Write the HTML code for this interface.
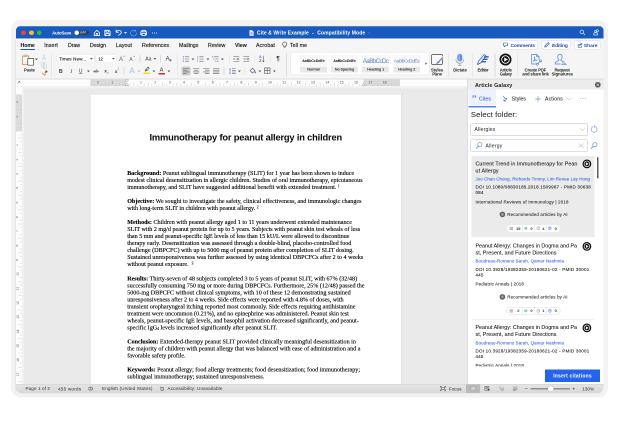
<!DOCTYPE html>
<html lang="en"><head><meta charset="utf-8"><title>Cite &amp; Write Example</title>
<style>
html,body{margin:0;padding:0;background:#fff}
#root{position:relative;width:620px;height:434px;overflow:hidden;background:#fff;font-family:"Liberation Sans",sans-serif;-webkit-font-smoothing:antialiased}
#root div,#root svg,#root span.t{position:absolute}
#root svg{overflow:visible}
#s{left:-41px;top:-35px;width:1340px;height:950px;transform:translate(-.5px,-.5px) scale(.5);transform-origin:0 0;will-change:transform}
#z{left:41.5px;top:35.5px;width:620px;height:434px;zoom:2}
.t{white-space:nowrap;display:block}
.t sup{font-size:.6em;vertical-align:baseline;position:relative;top:-.45em;line-height:0}
.t sub{font-size:.6em;vertical-align:baseline;position:relative;top:.2em;line-height:0}
</style></head>
<body><div id="root"><div id="s"><div id="z">
<div style="left:11px;top:20px;width:597px;height:377.5px;background:#f3f2f1;border-radius:10px"></div>
<div style="left:15.3px;top:39px;width:3px;height:352px;background:#d8d8d8"></div>
<div id="win" style="left:0;top:0;width:620px;height:434px;clip-path:inset(26.3px 16.5px 40.8px 16px round 4px 4px 6px 6px)">
<div style="left:16px;top:26px;width:588px;height:368px;background:#f5f5f5;"></div>
<div style="left:16px;top:26px;width:588px;height:12.7px;background:#185abd;"></div>
<div style="left:21px;top:30.4px;width:4.8px;height:4.8px;border-radius:50%;background:#e9453c"></div>
<div style="left:29px;top:30.4px;width:4.8px;height:4.8px;border-radius:50%;background:#f6b92e"></div>
<div style="left:36.8px;top:30.4px;width:4.8px;height:4.8px;border-radius:50%;background:#27c23a"></div>
<span id="t1" class="t" style="left:52.1px;top:30.27px;font-size:4.3px;line-height:5.16px;color:#fff;font-weight:700;letter-spacing:-0.090px;">AutoSave</span>
<div style="left:74.1px;top:30.4px;width:14.7px;height:4.7px;border-radius:2.4px;background:#33405a"></div>
<div style="left:74.3px;top:30.5px;width:4.5px;height:4.5px;border-radius:50%;background:#fff"></div>
<span id="t2" class="t" style="left:80.3px;top:31.21px;font-size:2.7px;line-height:3.24px;color:#e8e8e8;font-weight:700;letter-spacing:0.203px;">OFF</span>
<svg style="left:93.7px;top:29.3px;" width="6.8" height="6.8" viewBox="0 0 6 6"><path stroke="#fff" fill="none" stroke-width="0.7" stroke-linecap="round" stroke-linejoin="round" d="M0.6 3 L3 0.7 L5.4 3 V5.4 H0.6 Z M2.3 5.4 V3.6 H3.7 V5.4"/></svg>
<svg style="left:104px;top:29.3px;" width="6.9" height="6.9" viewBox="0 0 6 6"><path stroke="#fff" fill="none" stroke-width="0.7" stroke-linecap="round" stroke-linejoin="round" d="M0.7 0.7 H4.3 L5.3 1.7 V5.3 H0.7 Z M1.8 0.7 V2.3 H4 V0.7 M1.6 5.3 V3.5 H4.4 V5.3"/></svg>
<svg style="left:114.9px;top:29.2px;" width="7.6" height="7" viewBox="0 0 7 6.4"><path stroke="#fff" fill="none" stroke-width="0.7" stroke-linecap="round" stroke-linejoin="round" stroke-width="0.75" d="M1 0.8 V3 H3.2 M1.2 2.8 C2 1.2 4 0.7 5.2 1.8 C6.5 3 5.5 4.8 3.2 5.8"/></svg>
<svg style="left:123.9px;top:31.9px;" width="3" height="2" viewBox="0 0 3 2"><path fill="#fff" d="M0 0 H3 L1.5 1.8 Z"/></svg>
<svg style="left:129.9px;top:29.3px;" width="7" height="7" viewBox="0 0 6 6"><path stroke="#7d9fdc" fill="none" stroke-width="0.6" stroke-linecap="round" d="M4.6 1.2 A2.5 2.5 0 1 0 5.5 3 M4.7 0.3 V1.4 H3.6"/></svg>
<svg style="left:140.2px;top:29.3px;" width="7.4" height="6.9" viewBox="0 0 6.4 6"><path stroke="#fff" fill="none" stroke-width="0.7" stroke-linecap="round" stroke-linejoin="round" d="M1.7 2 V0.7 H4.7 V2 M1.7 4.4 H0.7 V2 H5.7 V4.4 H4.7 M1.7 3.4 H4.7 V5.3 H1.7 Z"/></svg>
<div style="left:152px;top:32.4px;width:0.9px;height:0.9px;border-radius:50%;background:#fff"></div>
<div style="left:154px;top:32.4px;width:0.9px;height:0.9px;border-radius:50%;background:#fff"></div>
<div style="left:156px;top:32.4px;width:0.9px;height:0.9px;border-radius:50%;background:#fff"></div>
<svg style="left:248.8px;top:29.9px;" width="5" height="6" viewBox="0 0 5 6"><path fill="#fff" d="M0.5 0.3 H3.2 L4.6 1.7 V5.7 H0.5 Z"/><path stroke="#185abd" stroke-width="0.4" d="M1.3 2.6 H3.8 M1.3 3.5 H3.8 M1.3 4.4 H3.8"/></svg>
<span id="t3" class="t" style="left:256.9px;top:30.06px;font-size:5px;line-height:6px;color:#fff;font-weight:700;letter-spacing:0.087px;">Cite &amp; Write Example</span>
<span id="t4" class="t" style="left:312px;top:30.06px;font-size:5px;line-height:6px;color:#fff;font-weight:700;">-</span>
<span id="t5" class="t" style="left:317.25px;top:30.06px;font-size:5px;line-height:6px;color:#fff;font-weight:700;letter-spacing:0.105px;">Compatibility Mode</span>
<svg style="left:367.3px;top:32.2px;" width="3" height="2" viewBox="0 0 3 2"><path stroke="#6f94d8" fill="none" stroke-width="0.5" d="M0.3 0.3 L1.5 1.5 L2.7 0.3"/></svg>
<svg style="left:579.5px;top:29.6px;opacity:.85;" width="6" height="6" viewBox="0 0 6 6"><circle stroke="#fff" fill="none" stroke-width="0.7" stroke-linecap="round" stroke-linejoin="round" stroke-width="0.55" cx="2.4" cy="2.4" r="1.8"/><path stroke="#fff" fill="none" stroke-width="0.7" stroke-linecap="round" stroke-linejoin="round" stroke-width="0.55" d="M3.8 3.8 L5.4 5.4"/></svg>
<svg style="left:592.8px;top:29.2px;opacity:.85;" width="6.4" height="7" viewBox="0 0 6.4 7"><circle stroke="#fff" fill="none" stroke-width="0.7" stroke-linecap="round" stroke-linejoin="round" stroke-width="0.6" cx="4.3" cy="1.8" r="1.1"/><path stroke="#fff" fill="none" stroke-width="0.7" stroke-linecap="round" stroke-linejoin="round" stroke-width="0.6" d="M0.7 6 V5 C0.7 4 1.8 3.6 2.6 3.6 C3.4 3.6 4.5 4 4.5 5 V6 Z"/><circle stroke="#fff" fill="none" stroke-width="0.7" stroke-linecap="round" stroke-linejoin="round" stroke-width="0.6" cx="2.6" cy="2.4" r="0.9"/></svg>
<div style="left:16px;top:38.7px;width:588px;height:12.5px;background:#f6f6f6;"></div>
<div style="left:16px;top:38.7px;width:588px;height:0.6px;background:#fff;"></div>
<span id="t6" class="t" style="left:20.5px;top:41.88px;font-size:5.3px;line-height:6.36px;color:#1a1a1a;font-weight:700;letter-spacing:-0.117px;-webkit-text-stroke:0.05px;">Home</span>
<span id="t7" class="t" style="left:44.2px;top:41.88px;font-size:5.3px;line-height:6.36px;color:#1a1a1a;letter-spacing:0.092px;-webkit-text-stroke:0.14px;">Insert</span>
<span id="t8" class="t" style="left:68px;top:41.88px;font-size:5.3px;line-height:6.36px;color:#1a1a1a;letter-spacing:-0.092px;-webkit-text-stroke:0.14px;">Draw</span>
<span id="t9" class="t" style="left:89.9px;top:41.88px;font-size:5.3px;line-height:6.36px;color:#1a1a1a;letter-spacing:-0.065px;-webkit-text-stroke:0.14px;">Design</span>
<span id="t10" class="t" style="left:115.9px;top:41.88px;font-size:5.3px;line-height:6.36px;color:#1a1a1a;letter-spacing:0.032px;-webkit-text-stroke:0.14px;">Layout</span>
<span id="t11" class="t" style="left:142px;top:41.88px;font-size:5.3px;line-height:6.36px;color:#1a1a1a;letter-spacing:-0.009px;-webkit-text-stroke:0.14px;">References</span>
<span id="t12" class="t" style="left:179px;top:41.88px;font-size:5.3px;line-height:6.36px;color:#1a1a1a;letter-spacing:-0.004px;-webkit-text-stroke:0.14px;">Mailings</span>
<span id="t13" class="t" style="left:208px;top:41.88px;font-size:5.3px;line-height:6.36px;color:#1a1a1a;letter-spacing:0.004px;-webkit-text-stroke:0.14px;">Review</span>
<span id="t14" class="t" style="left:235px;top:41.88px;font-size:5.3px;line-height:6.36px;color:#1a1a1a;font-weight:700;letter-spacing:-0.094px;-webkit-text-stroke:0.05px;">View</span>
<span id="t15" class="t" style="left:256px;top:41.88px;font-size:5.3px;line-height:6.36px;color:#1a1a1a;letter-spacing:0.106px;-webkit-text-stroke:0.14px;">Acrobat</span>
<span id="t16" class="t" style="left:290px;top:41.88px;font-size:5.3px;line-height:6.36px;color:#1a1a1a;letter-spacing:0.031px;-webkit-text-stroke:0.14px;">Tell me</span>
<div style="left:20.5px;top:49px;width:14.25px;height:1px;background:#185abd;"></div>
<svg style="left:281.8px;top:41.3px;" width="5.4" height="6.6" viewBox="0 0 5.4 6.6"><path stroke="#444" fill="none" stroke-width="0.55" d="M2.7 0.5 A2 2 0 0 1 3.8 4.2 V5 H1.6 V4.2 A2 2 0 0 1 2.7 0.5 Z M1.9 5.9 H3.5"/></svg>
<div style="left:500.4px;top:41px;width:37px;height:8px;background:#fff;border-radius:1.5px;box-shadow:0 0 0 0.5px #dcdcdc"></div>
<div style="left:542px;top:41px;width:28px;height:8px;background:#fff;border-radius:1.5px;box-shadow:0 0 0 0.5px #dcdcdc"></div>
<div style="left:574.6px;top:41px;width:25.4px;height:8px;background:#fff;border-radius:1.5px;box-shadow:0 0 0 0.5px #dcdcdc"></div>
<svg style="left:503.2px;top:42.7px;" width="5" height="4.8" viewBox="0 0 5 4.8"><path stroke="#1b4fae" fill="none" stroke-width="0.6" stroke-linejoin="round" d="M0.5 0.5 H4.5 V3.3 H2.3 L1.3 4.3 V3.3 H0.5 Z"/></svg>
<span id="t17" class="t" style="left:510.5px;top:42.32px;font-size:4.9px;line-height:5.88px;color:#1b4fae;font-weight:700;letter-spacing:-0.115px;">Comments</span>
<svg style="left:544.2px;top:42.2px;" width="5.8" height="5.8" viewBox="0 0 5 5"><path stroke="#1b4fae" fill="none" stroke-width="0.55" stroke-linejoin="round" d="M0.6 4.4 L1 3 L3.6 0.5 L4.5 1.4 L2 4 Z"/></svg>
<span id="t18" class="t" style="left:552px;top:42.32px;font-size:4.9px;line-height:5.88px;color:#1b4fae;font-weight:700;letter-spacing:-0.129px;">Editing</span>
<svg style="left:577.3px;top:42.4px;" width="5.4" height="5.2" viewBox="0 0 5.4 5.2"><path stroke="#1b4fae" fill="none" stroke-width="0.6" stroke-linejoin="round" stroke-linecap="round" d="M2 2.2 H0.6 V4.7 H4 V3.6 M2.2 3.3 C2.2 2 3 1.5 4 1.5 M3.2 0.5 L4.4 1.5 L3.2 2.5"/></svg>
<span id="t19" class="t" style="left:583.9px;top:42.32px;font-size:4.9px;line-height:5.88px;color:#1b4fae;font-weight:700;letter-spacing:-0.023px;">Share</span>
<div style="left:16px;top:51px;width:588px;height:27.6px;background:#f5f5f5;"></div>
<div style="left:16px;top:78.6px;width:588px;height:0.9px;background:#dddddd;"></div>
<svg style="left:21.5px;top:54px;" width="13.5" height="12" viewBox="0 0 13.5 12"><path fill="none" stroke="#e8963a" stroke-width="0.9" stroke-linejoin="round" d="M2.6 2 H1 V10.6 H6"/><path fill="none" stroke="#e8963a" stroke-width="0.9" d="M5.4 2 H7.2 V4"/>
<path fill="#f5f5f5" stroke="#9a9a9a" stroke-width="0.6" stroke-linejoin="round" d="M2.7 2.6 V1.3 H3.4 C3.4 0.5 4.7 0.5 4.7 1.3 H5.4 V2.6 Z"/>
<rect x="6.3" y="4.4" width="5.9" height="6.8" rx="0.5" fill="#fff" stroke="#444" stroke-width="0.7"/></svg>
<svg style="left:35px;top:58.7px;" width="2.8" height="1.8" viewBox="0 0 2.8 1.8"><path fill="#555" d="M0 0 H2.8 L1.4 1.7 Z"/></svg>
<span id="t20" class="t" style="left:24px;top:67.37px;font-size:4.3px;line-height:5.16px;color:#2a2a2a;font-weight:700;letter-spacing:-0.144px;">Paste</span>
<svg style="left:41.3px;top:54.2px;" width="5" height="6" viewBox="0 0 5 6"><path stroke="#c4cfe2" fill="none" stroke-width="0.45" d="M1.5 0.4 L3.3 4 M3.5 0.4 L1.7 4"/><circle cx="1.4" cy="4.7" r="0.8" fill="none" stroke="#b4c8ec" stroke-width="0.45"/><circle cx="3.6" cy="4.7" r="0.8" fill="none" stroke="#b4c8ec" stroke-width="0.45"/></svg>
<svg style="left:41px;top:61.8px;" width="6.4" height="6.6" viewBox="0 0 6.4 6.6"><path stroke="#c4c4c4" fill="none" stroke-width="0.5" d="M0.6 0.6 H3.6 V5 H0.6 Z M2.4 1.8 H4.6 L5.6 2.8 V6.2 H2.4 Z"/></svg>
<svg style="left:41.3px;top:70.2px;" width="6.4" height="6" viewBox="0 0 6.4 6"><path stroke="#444" fill="none" stroke-width="0.6" d="M3.2 2.6 L5 0.8 L5.6 1.4 L3.8 3.2 M4.2 0.6 L5.8 2.2"/><path stroke="#e8873a" fill="none" stroke-width="0.9" stroke-linejoin="round" d="M0.8 3 L3 5.2 L4.6 3.8"/></svg>
<div style="left:51.4px;top:53.5px;width:0.6px;height:23.5px;background:#dcdcdc;"></div>
<div style="left:56.8px;top:54.8px;width:37.2px;height:7.8px;background:#fff;border-radius:1.5px;box-shadow:0 0 0 0.4px #e2e2e2"></div>
<span id="t21" class="t" style="left:58.9px;top:56.13px;font-size:4.7px;line-height:5.64px;color:#111;letter-spacing:0.040px;-webkit-text-stroke:0.09px;">Times New...</span>
<svg style="left:90.1px;top:58.2px;" width="2.8" height="1.8" viewBox="0 0 2.8 1.8"><path fill="#555" d="M0 0 H2.8 L1.4 1.7 Z"/></svg>
<div style="left:96px;top:54.8px;width:19.8px;height:7.8px;background:#fff;border-radius:1.5px;box-shadow:0 0 0 0.4px #e2e2e2"></div>
<span id="t22" class="t" style="left:98.2px;top:56.31px;font-size:4.4px;line-height:5.28px;color:#111;letter-spacing:-0.099px;-webkit-text-stroke:0.09px;">12</span>
<svg style="left:111.9px;top:58.2px;" width="2.8" height="1.8" viewBox="0 0 2.8 1.8"><path fill="#555" d="M0 0 H2.8 L1.4 1.7 Z"/></svg>
<span id="t23" class="t" style="left:119px;top:55.37px;font-size:6px;line-height:7.2px;color:#666;">A</span>
<svg style="left:123px;top:55.4px;" width="2.4" height="1.6" viewBox="0 0 2.4 1.6"><path stroke="#4a80d8" fill="none" stroke-width="0.5" d="M0.3 1.3 L1.2 0.4 L2.1 1.3"/></svg>
<span id="t24" class="t" style="left:129.33px;top:56.36px;font-size:5px;line-height:6px;color:#666;">A</span>
<svg style="left:132.8px;top:55.6px;" width="2.4" height="1.6" viewBox="0 0 2.4 1.6"><path stroke="#4a80d8" fill="none" stroke-width="0.5" d="M0.3 0.4 L1.2 1.3 L2.1 0.4"/></svg>
<div style="left:139.7px;top:55.2px;width:0.6px;height:7.2px;background:#dcdcdc;"></div>
<span id="t25" class="t" style="left:145.25px;top:55.84px;font-size:5.2px;line-height:6.24px;color:#444;letter-spacing:-0.080px;">Aa</span>
<svg style="left:153.6px;top:58.2px;" width="2.8" height="1.8" viewBox="0 0 2.8 1.8"><path fill="#555" d="M0 0 H2.8 L1.4 1.7 Z"/></svg>
<div style="left:160.2px;top:55.2px;width:0.6px;height:7.2px;background:#dcdcdc;"></div>
<span id="t26" class="t" style="left:165.53px;top:55.15px;font-size:6.2px;line-height:7.44px;color:#444;">A</span>
<svg style="left:168.6px;top:58.6px;" width="3.6" height="3.4" viewBox="0 0 3.6 3.4"><path fill="#d9589a" d="M0.3 1.8 L1.8 0.3 L3.3 1.8 L1.8 3.2 Z"/><path fill="#7a8fe0" d="M1.8 0.3 L3.3 1.8 L2.6 2.5 L1.1 1 Z"/></svg>
<span id="t27" class="t" style="left:58.85px;top:68.12px;font-size:5.4px;line-height:6.48px;color:#444;font-weight:700;">B</span>
<span id="t28" class="t" style="left:70.27px;top:67.9px;font-size:5.6px;line-height:6.72px;color:#444;font-family:'Liberation Serif',serif;font-style:italic;">I</span>
<span id="t29" class="t" style="left:78.89px;top:68.16px;font-size:5px;line-height:6px;color:#444;text-decoration:underline;text-decoration-thickness:0.4px;text-underline-offset:0.6px;">U</span>
<svg style="left:86.8px;top:70.4px;" width="2.8" height="1.8" viewBox="0 0 2.8 1.8"><path fill="#555" d="M0 0 H2.8 L1.4 1.7 Z"/></svg>
<span id="t30" class="t" style="left:93.67px;top:68.73px;font-size:4.2px;line-height:5.04px;color:#555;">ab</span>
<div style="left:93.2px;top:71.3px;width:5.6px;height:0.4px;background:#555;"></div>
<span id="t31" class="t" style="left:104.26px;top:68.18px;font-size:4.8px;line-height:5.76px;color:#444;font-weight:700;">x</span>
<span id="t32" class="t" style="left:107.08px;top:71.47px;font-size:2.6px;line-height:3.12px;color:#3a78d8;">2</span>
<span id="t33" class="t" style="left:114.86px;top:68.38px;font-size:4.8px;line-height:5.76px;color:#444;font-weight:700;">x</span>
<span id="t34" class="t" style="left:117.78px;top:67.07px;font-size:2.6px;line-height:3.12px;color:#3a78d8;">2</span>
<div style="left:123.7px;top:67px;width:0.6px;height:8px;background:#dcdcdc;"></div>
<span id="t35" class="t" style="left:128.89px;top:65.54px;font-size:8.6px;line-height:10.32px;color:#bcd0f0;font-weight:700;">A</span>
<svg style="left:137.6px;top:70.4px;" width="2.8" height="1.8" viewBox="0 0 2.8 1.8"><path fill="#bbb" d="M0 0 H2.8 L1.4 1.7 Z"/></svg>
<svg style="left:143.3px;top:66.6px;" width="6.6" height="5.4" viewBox="0 0 6.6 5.4"><path stroke="#444" fill="none" stroke-width="0.6" stroke-linejoin="round" d="M1.6 4.4 L2.3 2.8 L4.6 0.6 L5.8 1.8 L3.5 4 L2 4.7 Z M2.3 2.8 L3.5 4"/></svg>
<div style="left:143.6px;top:72.6px;width:6.2px;height:1.5px;background:#f4dc1c;"></div>
<svg style="left:152.4px;top:70.4px;" width="2.8" height="1.8" viewBox="0 0 2.8 1.8"><path fill="#555" d="M0 0 H2.8 L1.4 1.7 Z"/></svg>
<span id="t36" class="t" style="left:159.63px;top:66.5px;font-size:5.6px;line-height:6.72px;color:#444;">A</span>
<div style="left:158.3px;top:72.8px;width:6.7px;height:1.5px;background:#e0261c;"></div>
<svg style="left:167.3px;top:70.4px;" width="2.8" height="1.8" viewBox="0 0 2.8 1.8"><path fill="#555" d="M0 0 H2.8 L1.4 1.7 Z"/></svg>
<div style="left:177.3px;top:52.8px;width:0.6px;height:23.7px;background:#dcdcdc;"></div>
<svg style="left:182.6px;top:55.8px;" width="7" height="6" viewBox="0 0 7 6"><path stroke="#666" stroke-width="0.55" d="M2.4 0.8 H6.6"/><circle cx="0.8" cy="0.8" r="0.55" fill="#2f6fd6"/><path stroke="#666" stroke-width="0.55" d="M2.4 3 H6.6"/><circle cx="0.8" cy="3" r="0.55" fill="#2f6fd6"/><path stroke="#666" stroke-width="0.55" d="M2.4 5.2 H6.6"/><circle cx="0.8" cy="5.2" r="0.55" fill="#2f6fd6"/></svg>
<svg style="left:191.6px;top:58.4px;" width="2.8" height="1.8" viewBox="0 0 2.8 1.8"><path fill="#555" d="M0 0 H2.8 L1.4 1.7 Z"/></svg>
<svg style="left:197.1px;top:55.8px;" width="7" height="6" viewBox="0 0 7 6"><path stroke="#666" stroke-width="0.55" d="M2.4 0.8 H6.6"/><path stroke="#2f6fd6" stroke-width="0.5" d="M0.8 0.10000000000000009 V1.5"/><path stroke="#666" stroke-width="0.55" d="M2.4 3 H6.6"/><path stroke="#2f6fd6" stroke-width="0.5" d="M0.8 2.3 V3.7"/><path stroke="#666" stroke-width="0.55" d="M2.4 5.2 H6.6"/><path stroke="#2f6fd6" stroke-width="0.5" d="M0.8 4.5 V5.9"/></svg>
<svg style="left:206.3px;top:58.4px;" width="2.8" height="1.8" viewBox="0 0 2.8 1.8"><path fill="#555" d="M0 0 H2.8 L1.4 1.7 Z"/></svg>
<svg style="left:212.2px;top:55.8px;" width="7" height="6" viewBox="0 0 7 6"><path stroke="#666" stroke-width="0.55" d="M1.8 0.8 H6.6 M3.4 3 H6.6 M4.6 5.2 H6.6"/><path stroke="#2f6fd6" stroke-width="0.5" d="M0.5 0.1 V1.5 M1.9 2.3 V3.7 M3.2 4.5 V5.9"/></svg>
<svg style="left:221.1px;top:58.4px;" width="2.8" height="1.8" viewBox="0 0 2.8 1.8"><path fill="#555" d="M0 0 H2.8 L1.4 1.7 Z"/></svg>
<div style="left:229px;top:55.2px;width:0.6px;height:7.2px;background:#dcdcdc;"></div>
<svg style="left:233px;top:55.8px;" width="6.6" height="6" viewBox="0 0 6.6 6"><path stroke="#666" stroke-width="0.55" d="M0.3 0.6 H6.3 M3.6 2.2 H6.3 M3.6 3.8 H6.3 M0.3 5.4 H6.3"/><path stroke="#2f6fd6" fill="none" stroke-width="0.5" d="M2.6 3 H0.4 M1.2 2.2 L0.4 3 L1.2 3.8"/></svg>
<svg style="left:242.8px;top:55.8px;" width="6.6" height="6" viewBox="0 0 6.6 6"><path stroke="#666" stroke-width="0.55" d="M0.3 0.6 H6.3 M3.6 2.2 H6.3 M3.6 3.8 H6.3 M0.3 5.4 H6.3"/><path stroke="#2f6fd6" fill="none" stroke-width="0.5" d="M0.4 3 H2.6 M1.8 2.2 L2.6 3 L1.8 3.8"/></svg>
<div style="left:254.3px;top:55.2px;width:0.6px;height:7.2px;background:#dcdcdc;"></div>
<span id="t37" class="t" style="left:259.07px;top:55px;font-size:3.4px;line-height:4.08px;color:#2f6fd6;font-weight:700;">A</span>
<span id="t38" class="t" style="left:259.26px;top:59.2px;font-size:3.4px;line-height:4.08px;color:#444;font-weight:700;">Z</span>
<svg style="left:262.2px;top:55.4px;" width="2.6" height="7" viewBox="0 0 2.6 7"><path stroke="#555" fill="none" stroke-width="0.55" d="M1.3 0.3 V6.2 M0.3 5.2 L1.3 6.3 L2.3 5.2"/></svg>
<div style="left:270px;top:55.2px;width:0.6px;height:7.2px;background:#dcdcdc;"></div>
<span id="t39" class="t" style="left:276.33px;top:55.07px;font-size:6px;line-height:7.2px;color:#333;font-weight:700;">¶</span>
<div style="left:181.4px;top:66.4px;width:9.3px;height:9.1px;background:#cdcdcd;border-radius:1.6px"></div>
<svg style="left:182.8px;top:67.85px;" width="6.4" height="6.2" viewBox="0 0 6.4 6.2"><path stroke="#666" stroke-width="0.6" d="M0.00 0.5 H6.40"/><path stroke="#666" stroke-width="0.6" d="M0.00 2.2 H4.40"/><path stroke="#666" stroke-width="0.6" d="M0.00 3.9 H6.40"/><path stroke="#666" stroke-width="0.6" d="M0.00 5.6 H3.40"/></svg>
<svg style="left:192.8px;top:67.85px;" width="6.4" height="6.2" viewBox="0 0 6.4 6.2"><path stroke="#666" stroke-width="0.6" d="M0.00 0.5 H6.40"/><path stroke="#666" stroke-width="0.6" d="M1.00 2.2 H5.40"/><path stroke="#666" stroke-width="0.6" d="M0.00 3.9 H6.40"/><path stroke="#666" stroke-width="0.6" d="M1.00 5.6 H5.40"/></svg>
<svg style="left:203px;top:67.85px;" width="6.4" height="6.2" viewBox="0 0 6.4 6.2"><path stroke="#666" stroke-width="0.6" d="M0.00 0.5 H6.40"/><path stroke="#666" stroke-width="0.6" d="M2.00 2.2 H6.40"/><path stroke="#666" stroke-width="0.6" d="M0.00 3.9 H6.40"/><path stroke="#666" stroke-width="0.6" d="M2.00 5.6 H6.40"/></svg>
<svg style="left:213.1px;top:67.85px;" width="6.4" height="6.2" viewBox="0 0 6.4 6.2"><path stroke="#666" stroke-width="0.6" d="M0.00 0.5 H6.40"/><path stroke="#666" stroke-width="0.6" d="M0.00 2.2 H6.40"/><path stroke="#666" stroke-width="0.6" d="M0.00 3.9 H6.40"/><path stroke="#666" stroke-width="0.6" d="M0.00 5.6 H6.40"/></svg>
<div style="left:223.7px;top:67px;width:0.6px;height:8px;background:#dcdcdc;"></div>
<svg style="left:229.2px;top:67.8px;" width="7" height="6.4" viewBox="0 0 7 6.4"><path stroke="#666" stroke-width="0.55" d="M3 0.6 H6.8 M3 2.3 H6.8 M3 4 H6.8 M3 5.7 H6.8"/><path stroke="#2f6fd6" fill="none" stroke-width="0.5" d="M1 0.5 V5.8 M0.2 1.4 L1 0.5 L1.8 1.4 M0.2 4.9 L1 5.8 L1.8 4.9"/></svg>
<svg style="left:237.9px;top:70.4px;" width="2.8" height="1.8" viewBox="0 0 2.8 1.8"><path fill="#555" d="M0 0 H2.8 L1.4 1.7 Z"/></svg>
<div style="left:244.45px;top:67px;width:0.6px;height:8px;background:#dcdcdc;"></div>
<svg style="left:249.6px;top:67.6px;" width="6.8" height="6.6" viewBox="0 0 6.8 6.6"><path stroke="#444" fill="none" stroke-width="0.55" stroke-linejoin="round" d="M3 0.8 L5.4 3.2 L3 5.6 L0.6 3.2 Z M3 0.8 V0.2"/><path fill="#2f6fd6" d="M5.6 3.6 C6.2 4.4 6.4 4.8 6.4 5.1 A0.7 0.7 0 0 1 5 5.1 C5 4.8 5.2 4.4 5.6 3.6 Z"/></svg>
<svg style="left:258.4px;top:70.4px;" width="2.8" height="1.8" viewBox="0 0 2.8 1.8"><path fill="#555" d="M0 0 H2.8 L1.4 1.7 Z"/></svg>
<svg style="left:264.2px;top:67.7px;" width="6.4" height="6.4" viewBox="0 0 6.4 6.4"><path stroke="#555" fill="none" stroke-width="0.6" d="M0.4 0.4 H6 V6 H0.4 Z M3.2 0.4 V6 M0.4 3.2 H6"/></svg>
<svg style="left:273.1px;top:70.4px;" width="2.8" height="1.8" viewBox="0 0 2.8 1.8"><path fill="#555" d="M0 0 H2.8 L1.4 1.7 Z"/></svg>
<div style="left:286.2px;top:52.8px;width:0.6px;height:23.7px;background:#dedede;"></div>
<div style="left:290.8px;top:52.4px;width:138.4px;height:21.9px;background:#fff;border-radius:2px;box-shadow:0 0 0 0.4px #e4e4e4"></div>
<div style="left:300px;top:55px;width:26.8px;height:12px;background:#f8f8f8;"></div>
<div style="left:300px;top:67px;width:26.8px;height:5.7px;background:#e8e8e8;"></div>
<span id="t40" class="t" style="left:302.15px;top:58.82px;font-size:3.7px;line-height:4.44px;color:#222;font-weight:700;letter-spacing:-0.132px;">AaBbCcDdEe</span>
<span id="t41" class="t" style="left:307.25px;top:67.52px;font-size:3.7px;line-height:4.44px;color:#333;font-weight:700;letter-spacing:-0.072px;">Normal</span>
<div style="left:331.1px;top:55px;width:26.8px;height:12px;background:#f8f8f8;"></div>
<div style="left:331.1px;top:67px;width:26.8px;height:5.7px;background:#e8e8e8;"></div>
<span id="t42" class="t" style="left:333.25px;top:58.82px;font-size:3.7px;line-height:4.44px;color:#222;font-weight:700;letter-spacing:-0.132px;">AaBbCcDdEe</span>
<span id="t43" class="t" style="left:334.9px;top:67.52px;font-size:3.7px;line-height:4.44px;color:#333;font-weight:700;letter-spacing:-0.113px;">No Spacing</span>
<div style="left:362.2px;top:55px;width:26.8px;height:12px;background:#f8f8f8;"></div>
<div style="left:362.2px;top:67px;width:26.8px;height:5.7px;background:#e8e8e8;"></div>
<span id="t44" class="t" style="left:362.8px;top:57.35px;font-size:6.2px;line-height:7.44px;color:#5c86cc;letter-spacing:-0.588px;">AaBbCcDc</span>
<span id="t45" class="t" style="left:367.1px;top:67.52px;font-size:3.7px;line-height:4.44px;color:#333;font-weight:700;letter-spacing:-0.074px;">Heading 1</span>
<div style="left:393.3px;top:55px;width:26.8px;height:12px;background:#f8f8f8;"></div>
<div style="left:393.3px;top:67px;width:26.8px;height:5.7px;background:#e8e8e8;"></div>
<span id="t46" class="t" style="left:393.9px;top:58.18px;font-size:4.8px;line-height:5.76px;color:#5c86cc;letter-spacing:-0.400px;">AaBbCcDdEe</span>
<span id="t47" class="t" style="left:398.2px;top:67.52px;font-size:3.7px;line-height:4.44px;color:#333;font-weight:700;letter-spacing:-0.074px;">Heading 2</span>
<svg style="left:424.8px;top:61.8px;" width="2.4" height="3" viewBox="0 0 2.4 3"><path fill="#555" d="M0.3 0.2 L2.1 1.5 L0.3 2.8 Z"/></svg>
<svg style="left:431px;top:54px;" width="12.6" height="11.4" viewBox="0 0 12.6 11.4"><rect x="0.6" y="0.6" width="10.8" height="9.8" rx="0.8" fill="#fbfbfb" stroke="#444" stroke-width="0.7"/><path stroke="#666" stroke-width="0.8" d="M11.6 4 L7.2 8.2"/><path stroke="#f5f5f5" stroke-width="1.8" d="M12.4 2.6 L10.2 4.8"/><path stroke="#666" stroke-width="0.8" d="M11.9 3.4 L7.4 7.9"/><path fill="#4a86dc" d="M7.6 7.2 L8.6 8.2 C7.6 9.6 6 9.8 4.4 9.6 C5.8 9 6 7.6 7.6 7.2 Z"/></svg>
<span id="t48" class="t" style="left:430.9px;top:67.27px;font-size:4.3px;line-height:5.16px;color:#2a2a2a;font-weight:700;letter-spacing:-0.077px;">Styles</span>
<span id="t49" class="t" style="left:432.2px;top:71.47px;font-size:4.3px;line-height:5.16px;color:#2a2a2a;font-weight:700;letter-spacing:-0.168px;">Pane</span>
<div style="left:448.5px;top:53.5px;width:0.6px;height:23.5px;background:#dcdcdc;"></div>
<svg style="left:454.6px;top:53.4px;" width="10.4" height="13" viewBox="0 0 10.4 13"><rect x="2.8" y="0.4" width="5" height="7.6" rx="2.5" fill="#5b93e0"/><rect x="3.9" y="1" width="1.6" height="6.4" rx="0.8" fill="#8ab4ec"/><path stroke="#9a9a9a" fill="none" stroke-width="0.7" d="M1.4 6 C1.4 11 9.2 11 9.2 6 M5.3 9.9 V12 M3.6 12.2 H7"/></svg>
<span id="t50" class="t" style="left:453.2px;top:67.27px;font-size:4.3px;line-height:5.16px;color:#2a2a2a;font-weight:700;letter-spacing:-0.104px;">Dictate</span>
<div style="left:472.1px;top:53.5px;width:0.6px;height:23.5px;background:#dcdcdc;"></div>
<svg style="left:476.6px;top:53.4px;" width="12.4" height="12.4" viewBox="0 0 12.4 12.4"><path stroke="#2f6cd0" fill="none" stroke-width="0.8" stroke-linejoin="round" d="M1 11 L2 7.6 L7.8 1 L9.6 2.6 L4.2 9.4 Z"/><path stroke="#1c51b3" stroke-width="1.25" d="M7.6 3.4 H12.2 M6.2 5.8 H11 M4.8 8.2 H9.6"/><path stroke="#2f6cd0" stroke-width="0.7" d="M1 11 L4.2 9.4"/></svg>
<span id="t51" class="t" style="left:477.55px;top:67.27px;font-size:4.3px;line-height:5.16px;color:#2a2a2a;font-weight:700;letter-spacing:-0.252px;">Editor</span>
<div style="left:494.7px;top:53.5px;width:0.6px;height:23.5px;background:#dcdcdc;"></div>
<svg style="left:499.7px;top:53.3px" width="12" height="12" viewBox="-10 -10 20 20"><circle r="10" fill="#111"/><circle r="6.4" fill="none" stroke="#fff" stroke-width="1.5"/><path fill="#fff" d="M-2.2 -3.6 L4 0 L-2.2 3.6 Z"/></svg>
<span id="t52" class="t" style="left:499.75px;top:67.27px;font-size:4.3px;line-height:5.16px;color:#2a2a2a;font-weight:700;letter-spacing:-0.211px;">Article</span>
<span id="t53" class="t" style="left:499.7px;top:71.47px;font-size:4.3px;line-height:5.16px;color:#2a2a2a;font-weight:700;letter-spacing:-0.350px;">Galaxy</span>
<div style="left:517.4px;top:53.5px;width:0.6px;height:23.5px;background:#dcdcdc;"></div>
<svg style="left:530.6px;top:54px;" width="11.6" height="11.6" viewBox="0 0 11.6 11.6"><path stroke="#4a80dc" fill="none" stroke-width="0.7" stroke-linejoin="round" d="M8.6 5.6 V2.6 L6.4 0.5 H1.2 V10 H5.4 M6.2 0.6 V2.8 H8.5"/><path stroke="#4a80dc" fill="none" stroke-width="0.55" d="M2.6 7.4 C4 6 4.6 4 4.2 3 C3.6 2.6 3.6 4 4.6 5.4 C5.4 6.4 6.6 6.6 7 6.2 C6.6 5.6 4 6.4 2.6 7.4 Z"/><path stroke="#4a80dc" fill="none" stroke-width="0.7" stroke-linecap="round" d="M7.2 9.8 L9.8 7.2"/><circle cx="6.8" cy="10.2" r="1" fill="none" stroke="#4a80dc" stroke-width="0.6"/><circle cx="10.2" cy="6.8" r="1" fill="none" stroke="#4a80dc" stroke-width="0.6"/></svg>
<span id="t54" class="t" style="left:524.55px;top:67.27px;font-size:4.3px;line-height:5.16px;color:#2a2a2a;font-weight:700;letter-spacing:-0.146px;">Create PDF</span>
<span id="t55" class="t" style="left:522.3px;top:71.47px;font-size:4.3px;line-height:5.16px;color:#2a2a2a;font-weight:700;letter-spacing:-0.178px;">and share link</span>
<svg style="left:554.6px;top:54px;" width="13" height="11.6" viewBox="0 0 13 11.6"><path stroke="#4a80dc" fill="none" stroke-width="0.7" stroke-linejoin="round" d="M5.4 0.5 C7 0.5 7.6 1.8 7.6 3 C7.6 4.4 6.8 5.4 6.4 5.8 V6.6 C7.6 7 9.4 7.6 9.8 8.2 M4.4 5.8 C4 5.4 3.2 4.4 3.2 3 C3.2 1.8 3.8 0.5 5.4 0.5 M4.4 5.8 V6.6 C2.6 7.2 0.8 7.8 0.6 9.4 V10 H6"/><path stroke="#4a80dc" stroke-width="0.6" d="M6.8 10.6 H12.4"/><path stroke="#4a80dc" fill="none" stroke-width="0.5" d="M7.4 9.6 L8.2 8.4 L8.8 9.6 L9.6 8.6 L10.2 9.6 H11.6"/></svg>
<span id="t56" class="t" style="left:554.45px;top:67.27px;font-size:4.3px;line-height:5.16px;color:#2a2a2a;font-weight:700;letter-spacing:-0.265px;">Request</span>
<span id="t57" class="t" style="left:551.6px;top:71.47px;font-size:4.3px;line-height:5.16px;color:#2a2a2a;font-weight:700;letter-spacing:-0.081px;">Signatures</span>
<div style="left:16px;top:79.5px;width:452px;height:9px;background:#f3f3f3;"></div>
<div style="left:16px;top:79.5px;width:6px;height:305px;background:#fdfdfd;"></div>
<div style="left:22.3px;top:79.5px;width:445px;height:6.3px;background:#fdfdfd;"></div>
<div style="left:90.3px;top:79.5px;width:36.2px;height:6.3px;background:#d9d9d9;"></div>
<div style="left:363.6px;top:79.5px;width:36.2px;height:6.3px;background:#d9d9d9;"></div>
<svg style="left:90px;top:79.5px;" width="310" height="6.3" viewBox="0 0 310 6.3"><path stroke="#c0c0c0" stroke-width="0.45" d="M0.88 3.20 V6.2 M4.46 4.60 V6.2 M11.62 4.60 V6.2 M15.20 3.20 V6.2 M18.79 4.60 V6.2 M25.95 4.60 V6.2 M29.53 3.20 V6.2 M33.12 4.60 V6.2 M40.28 4.60 V6.2 M43.87 3.20 V6.2 M47.45 4.60 V6.2 M54.61 4.60 V6.2 M58.19 3.20 V6.2 M61.78 4.60 V6.2 M68.94 4.60 V6.2 M72.53 3.20 V6.2 M76.11 4.60 V6.2 M83.27 4.60 V6.2 M86.86 3.20 V6.2 M90.44 4.60 V6.2 M97.60 4.60 V6.2 M101.19 3.20 V6.2 M104.77 4.60 V6.2 M111.93 4.60 V6.2 M115.51 3.20 V6.2 M119.10 4.60 V6.2 M126.26 4.60 V6.2 M129.84 3.20 V6.2 M133.43 4.60 V6.2 M140.59 4.60 V6.2 M144.18 3.20 V6.2 M147.76 4.60 V6.2 M154.92 4.60 V6.2 M158.50 3.20 V6.2 M162.09 4.60 V6.2 M169.25 4.60 V6.2 M172.83 3.20 V6.2 M176.42 4.60 V6.2 M183.58 4.60 V6.2 M187.17 3.20 V6.2 M190.75 4.60 V6.2 M197.91 4.60 V6.2 M201.50 3.20 V6.2 M205.08 4.60 V6.2 M212.24 4.60 V6.2 M215.82 3.20 V6.2 M219.41 4.60 V6.2 M226.57 4.60 V6.2 M230.16 3.20 V6.2 M233.74 4.60 V6.2 M240.90 4.60 V6.2 M244.49 3.20 V6.2 M248.07 4.60 V6.2 M255.23 4.60 V6.2 M258.81 3.20 V6.2 M262.40 4.60 V6.2 M269.56 4.60 V6.2 M273.14 3.20 V6.2 M276.73 4.60 V6.2 M283.89 4.60 V6.2 M287.48 3.20 V6.2 M291.06 4.60 V6.2 M298.22 4.60 V6.2 M301.81 3.20 V6.2 M305.39 4.60 V6.2 "/></svg>
<span id="t58" class="t" style="left:140.05px;top:80.44px;font-size:3.5px;line-height:4.2px;color:#555;">1</span>
<span id="t59" class="t" style="left:154.38px;top:80.44px;font-size:3.5px;line-height:4.2px;color:#555;">2</span>
<span id="t60" class="t" style="left:168.71px;top:80.44px;font-size:3.5px;line-height:4.2px;color:#555;">3</span>
<span id="t61" class="t" style="left:183.04px;top:80.44px;font-size:3.5px;line-height:4.2px;color:#555;">4</span>
<span id="t62" class="t" style="left:197.37px;top:80.44px;font-size:3.5px;line-height:4.2px;color:#555;">5</span>
<span id="t63" class="t" style="left:211.7px;top:80.44px;font-size:3.5px;line-height:4.2px;color:#555;">6</span>
<span id="t64" class="t" style="left:226.03px;top:80.44px;font-size:3.5px;line-height:4.2px;color:#555;">7</span>
<span id="t65" class="t" style="left:240.36px;top:80.44px;font-size:3.5px;line-height:4.2px;color:#555;">8</span>
<span id="t66" class="t" style="left:254.69px;top:80.44px;font-size:3.5px;line-height:4.2px;color:#555;">9</span>
<span id="t67" class="t" style="left:268.05px;top:80.44px;font-size:3.5px;line-height:4.2px;color:#555;">10</span>
<span id="t68" class="t" style="left:282.51px;top:80.44px;font-size:3.5px;line-height:4.2px;color:#555;">11</span>
<span id="t69" class="t" style="left:296.71px;top:80.44px;font-size:3.5px;line-height:4.2px;color:#555;">12</span>
<span id="t70" class="t" style="left:311.04px;top:80.44px;font-size:3.5px;line-height:4.2px;color:#555;">13</span>
<span id="t71" class="t" style="left:325.37px;top:80.44px;font-size:3.5px;line-height:4.2px;color:#555;">14</span>
<span id="t72" class="t" style="left:339.7px;top:80.44px;font-size:3.5px;line-height:4.2px;color:#555;">15</span>
<span id="t73" class="t" style="left:354.03px;top:80.44px;font-size:3.5px;line-height:4.2px;color:#555;">16</span>
<span id="t74" class="t" style="left:368.36px;top:80.44px;font-size:3.5px;line-height:4.2px;color:#555;">17</span>
<span id="t75" class="t" style="left:382.69px;top:80.44px;font-size:3.5px;line-height:4.2px;color:#555;">18</span>
<span id="t76" class="t" style="left:111.39px;top:80.44px;font-size:3.5px;line-height:4.2px;color:#555;">1</span>
<span id="t77" class="t" style="left:97.06px;top:80.44px;font-size:3.5px;line-height:4.2px;color:#555;">2</span>
<svg style="left:124.4px;top:79.3px;" width="4.6" height="9.4" viewBox="0 0 4.6 9.4"><path fill="#fff" stroke="#9a9a9a" stroke-width="0.45" d="M0.5 0.4 H4.1 L2.3 2.6 Z M2.3 3.4 L4.1 5.6 H0.5 Z M0.5 6 H4.1 V8.4 H0.5 Z"/></svg>
<svg style="left:361.6px;top:83px;" width="4.2" height="3.2" viewBox="0 0 4.2 3.2"><path fill="#fff" stroke="#9a9a9a" stroke-width="0.45" d="M2.1 0.4 L3.8 2.6 H0.4 Z"/></svg>
<svg style="left:17.2px;top:80.6px;" width="3.4" height="3.4" viewBox="0 0 3.4 3.4"><path stroke="#666" fill="none" stroke-width="0.5" d="M0.6 3 L2.8 0.8 M1.4 0.7 H2.9 V2.2"/></svg>
<div style="left:22px;top:88.4px;width:445.5px;height:296px;background:#eaeaea;"></div>
<div style="left:22px;top:85.8px;width:445.5px;height:2.6px;background:#f1f1f1;"></div>
<div style="left:22px;top:85.8px;width:2px;height:298.5px;background:#f1f1f1;"></div>
<div style="left:16.2px;top:94.4px;width:5.8px;height:37px;background:#dcdcdc;"></div>
<span id="t78" class="t" style="left:15.96px;top:99.9px;font-size:3.4px;line-height:4.08px;color:#666;transform:rotate(-90deg);">2</span>
<span id="t79" class="t" style="left:15.96px;top:114.3px;font-size:3.4px;line-height:4.08px;color:#666;transform:rotate(-90deg);">1</span>
<svg style="left:16.2px;top:94px;" width="6" height="290" viewBox="0 0 6 290"><path stroke="#c6c6c6" stroke-width="0.45" d="M4.10 11.79 H5.8 M2.20 15.38 H5.8 M4.10 18.96 H5.8 M4.10 26.12 H5.8 M2.20 29.70 H5.8 M4.10 33.29 H5.8 M4.10 40.45 H5.8 M2.20 44.03 H5.8 M4.10 47.62 H5.8 M4.10 54.78 H5.8 M2.20 58.37 H5.8 M4.10 61.95 H5.8 M4.10 69.11 H5.8 M2.20 72.70 H5.8 M4.10 76.28 H5.8 M4.10 83.44 H5.8 M2.20 87.03 H5.8 M4.10 90.61 H5.8 M4.10 97.77 H5.8 M2.20 101.36 H5.8 M4.10 104.94 H5.8 M4.10 112.10 H5.8 M2.20 115.69 H5.8 M4.10 119.27 H5.8 M4.10 126.43 H5.8 M2.20 130.02 H5.8 M4.10 133.60 H5.8 M4.10 140.76 H5.8 M2.20 144.35 H5.8 M4.10 147.93 H5.8 M4.10 155.09 H5.8 M2.20 158.68 H5.8 M4.10 162.26 H5.8 M4.10 169.42 H5.8 M2.20 173.01 H5.8 M4.10 176.59 H5.8 M4.10 183.75 H5.8 M2.20 187.34 H5.8 M4.10 190.92 H5.8 M4.10 198.08 H5.8 M2.20 201.67 H5.8 M4.10 205.25 H5.8 M4.10 212.41 H5.8 M2.20 216.00 H5.8 M4.10 219.58 H5.8 M4.10 226.74 H5.8 M2.20 230.32 H5.8 M4.10 233.91 H5.8 M4.10 241.07 H5.8 M2.20 244.65 H5.8 M4.10 248.24 H5.8 M4.10 255.40 H5.8 M2.20 258.98 H5.8 M4.10 262.57 H5.8 M4.10 269.73 H5.8 M2.20 273.31 H5.8 M4.10 276.90 H5.8 M4.10 284.06 H5.8 M2.20 287.64 H5.8 "/></svg>
<span id="t80" class="t" style="left:15.96px;top:143.23px;font-size:3.4px;line-height:4.08px;color:#666;transform:rotate(-90deg);">1</span>
<span id="t81" class="t" style="left:15.96px;top:157.56px;font-size:3.4px;line-height:4.08px;color:#666;transform:rotate(-90deg);">2</span>
<span id="t82" class="t" style="left:15.96px;top:171.89px;font-size:3.4px;line-height:4.08px;color:#666;transform:rotate(-90deg);">3</span>
<span id="t83" class="t" style="left:15.96px;top:186.22px;font-size:3.4px;line-height:4.08px;color:#666;transform:rotate(-90deg);">4</span>
<span id="t84" class="t" style="left:15.96px;top:200.55px;font-size:3.4px;line-height:4.08px;color:#666;transform:rotate(-90deg);">5</span>
<span id="t85" class="t" style="left:15.96px;top:214.88px;font-size:3.4px;line-height:4.08px;color:#666;transform:rotate(-90deg);">6</span>
<span id="t86" class="t" style="left:15.96px;top:229.21px;font-size:3.4px;line-height:4.08px;color:#666;transform:rotate(-90deg);">7</span>
<span id="t87" class="t" style="left:15.96px;top:243.54px;font-size:3.4px;line-height:4.08px;color:#666;transform:rotate(-90deg);">8</span>
<span id="t88" class="t" style="left:15.96px;top:257.87px;font-size:3.4px;line-height:4.08px;color:#666;transform:rotate(-90deg);">9</span>
<span id="t89" class="t" style="left:15.96px;top:272.2px;font-size:3.4px;line-height:4.08px;color:#666;transform:rotate(-90deg);">10</span>
<span id="t90" class="t" style="left:15.96px;top:286.53px;font-size:3.4px;line-height:4.08px;color:#666;transform:rotate(-90deg);">11</span>
<span id="t91" class="t" style="left:15.96px;top:300.86px;font-size:3.4px;line-height:4.08px;color:#666;transform:rotate(-90deg);">12</span>
<span id="t92" class="t" style="left:15.96px;top:315.19px;font-size:3.4px;line-height:4.08px;color:#666;transform:rotate(-90deg);">13</span>
<span id="t93" class="t" style="left:15.96px;top:329.52px;font-size:3.4px;line-height:4.08px;color:#666;transform:rotate(-90deg);">14</span>
<span id="t94" class="t" style="left:15.96px;top:343.85px;font-size:3.4px;line-height:4.08px;color:#666;transform:rotate(-90deg);">15</span>
<span id="t95" class="t" style="left:15.96px;top:358.18px;font-size:3.4px;line-height:4.08px;color:#666;transform:rotate(-90deg);">16</span>
<span id="t96" class="t" style="left:15.96px;top:372.51px;font-size:3.4px;line-height:4.08px;color:#666;transform:rotate(-90deg);">17</span>
<div style="left:90.5px;top:94.5px;width:310.5px;height:290px;background:#fff;box-shadow:0 0 0 0.4px #d6d6d6"></div>
<span id="t97" class="t" style="left:149.5px;top:131.8px;font-size:9.3px;line-height:11.16px;color:#0a0a0a;font-weight:700;letter-spacing:-0.169px;">Immunotherapy for peanut allergy in children</span>
<span id="t98" class="t" style="left:127.2px;top:169.38px;font-size:6.1px;line-height:7.32px;color:#000;font-family:'Liberation Serif',serif;-webkit-text-stroke:0.12px;"><b>Background:</b> Peanut sublingual immunotherapy (SLIT) for 1 year has been shown to induce</span>
<span id="t99" class="t" style="left:127.2px;top:176.41px;font-size:6.1px;line-height:7.32px;color:#000;font-family:'Liberation Serif',serif;-webkit-text-stroke:0.12px;">modest clinical desensitization in allergic children. Studies of oral immunotherapy, epicutaneous</span>
<span id="t100" class="t" style="left:127.2px;top:183.43px;font-size:6.1px;line-height:7.32px;color:#000;font-family:'Liberation Serif',serif;-webkit-text-stroke:0.12px;">immunotherapy, and SLIT have suggested additional benefit with extended treatment. <sup>1</sup></span>
<span id="t101" class="t" style="left:127.2px;top:197.49px;font-size:6.1px;line-height:7.32px;color:#000;font-family:'Liberation Serif',serif;-webkit-text-stroke:0.12px;"><b>Objective:</b> We sought to investigate the safety, clinical effectiveness, and immunologic changes</span>
<span id="t102" class="t" style="left:127.2px;top:204.51px;font-size:6.1px;line-height:7.32px;color:#000;font-family:'Liberation Serif',serif;-webkit-text-stroke:0.12px;">with long-term SLIT in children with peanut allergy. <sup>2</sup></span>
<span id="t103" class="t" style="left:127.2px;top:218.56px;font-size:6.1px;line-height:7.32px;color:#000;font-family:'Liberation Serif',serif;-webkit-text-stroke:0.12px;"><b>Methods:</b> Children with peanut allergy aged 1 to 11 years underwent extended maintenance</span>
<span id="t104" class="t" style="left:127.2px;top:225.59px;font-size:6.1px;line-height:7.32px;color:#000;font-family:'Liberation Serif',serif;-webkit-text-stroke:0.12px;">SLIT with 2 mg/d peanut protein for up to 5 years. Subjects with peanut skin test wheals of less</span>
<span id="t105" class="t" style="left:127.2px;top:232.62px;font-size:6.1px;line-height:7.32px;color:#000;font-family:'Liberation Serif',serif;-webkit-text-stroke:0.12px;">than 5 mm and peanut-specific IgE levels of less than 15 kU/L were allowed to discontinue</span>
<span id="t106" class="t" style="left:127.2px;top:239.64px;font-size:6.1px;line-height:7.32px;color:#000;font-family:'Liberation Serif',serif;-webkit-text-stroke:0.12px;">therapy early. Desensitization was assessed through a double-blind, placebo-controlled food</span>
<span id="t107" class="t" style="left:127.2px;top:246.67px;font-size:6.1px;line-height:7.32px;color:#000;font-family:'Liberation Serif',serif;-webkit-text-stroke:0.12px;">challenge (DBPCFC) with up to 5000 mg of peanut protein after completion of SLIT dosing.</span>
<span id="t108" class="t" style="left:127.2px;top:253.69px;font-size:6.1px;line-height:7.32px;color:#000;font-family:'Liberation Serif',serif;-webkit-text-stroke:0.12px;">Sustained unresponsiveness was further assessed by using identical DBPCFCs after 2 to 4 weeks</span>
<span id="t109" class="t" style="left:127.2px;top:260.72px;font-size:6.1px;line-height:7.32px;color:#000;font-family:'Liberation Serif',serif;-webkit-text-stroke:0.12px;">without peanut exposure.&nbsp; <sup>3</sup></span>
<span id="t110" class="t" style="left:127.2px;top:274.77px;font-size:6.1px;line-height:7.32px;color:#000;font-family:'Liberation Serif',serif;-webkit-text-stroke:0.12px;"><b>Results:</b> Thirty-seven of 48 subjects completed 3 to 5 years of peanut SLIT, with 67% (32/48)</span>
<span id="t111" class="t" style="left:127.2px;top:281.8px;font-size:6.1px;line-height:7.32px;color:#000;font-family:'Liberation Serif',serif;-webkit-text-stroke:0.12px;">successfully consuming 750 mg or more during DBPCFCs. Furthermore, 25% (12/48) passed the</span>
<span id="t112" class="t" style="left:127.2px;top:288.82px;font-size:6.1px;line-height:7.32px;color:#000;font-family:'Liberation Serif',serif;-webkit-text-stroke:0.12px;">5000-mg DBPCFC without clinical symptoms, with 10 of these 12 demonstrating sustained</span>
<span id="t113" class="t" style="left:127.2px;top:295.85px;font-size:6.1px;line-height:7.32px;color:#000;font-family:'Liberation Serif',serif;-webkit-text-stroke:0.12px;">unresponsiveness after 2 to 4 weeks. Side effects were reported with 4.8% of doses, with</span>
<span id="t114" class="t" style="left:127.2px;top:302.88px;font-size:6.1px;line-height:7.32px;color:#000;font-family:'Liberation Serif',serif;-webkit-text-stroke:0.12px;">transient oropharyngeal itching reported most commonly. Side effects requiring antihistamine</span>
<span id="t115" class="t" style="left:127.2px;top:309.9px;font-size:6.1px;line-height:7.32px;color:#000;font-family:'Liberation Serif',serif;-webkit-text-stroke:0.12px;">treatment were uncommon (0.21%), and no epinephrine was administered. Peanut skin test</span>
<span id="t116" class="t" style="left:127.2px;top:316.93px;font-size:6.1px;line-height:7.32px;color:#000;font-family:'Liberation Serif',serif;-webkit-text-stroke:0.12px;">wheals, peanut-specific IgE levels, and basophil activation decreased significantly, and peanut-</span>
<span id="t117" class="t" style="left:127.2px;top:323.95px;font-size:6.1px;line-height:7.32px;color:#000;font-family:'Liberation Serif',serif;-webkit-text-stroke:0.12px;">specific IgG<sub>4</sub> levels increased significantly after peanut SLIT.</span>
<span id="t118" class="t" style="left:127.2px;top:338.01px;font-size:6.1px;line-height:7.32px;color:#000;font-family:'Liberation Serif',serif;-webkit-text-stroke:0.12px;"><b>Conclusion:</b> Extended-therapy peanut SLIT provided clinically meaningful desensitization in</span>
<span id="t119" class="t" style="left:127.2px;top:345.03px;font-size:6.1px;line-height:7.32px;color:#000;font-family:'Liberation Serif',serif;-webkit-text-stroke:0.12px;">the majority of children with peanut allergy that was balanced with ease of administration and a</span>
<span id="t120" class="t" style="left:127.2px;top:352.06px;font-size:6.1px;line-height:7.32px;color:#000;font-family:'Liberation Serif',serif;-webkit-text-stroke:0.12px;">favorable safety profile.</span>
<span id="t121" class="t" style="left:127.2px;top:366.11px;font-size:6.1px;line-height:7.32px;color:#000;font-family:'Liberation Serif',serif;-webkit-text-stroke:0.12px;"><b>Keywords:</b> Peanut allergy; food allergy treatments; food desensitization; food immunotherapy;</span>
<span id="t122" class="t" style="left:127.2px;top:373.14px;font-size:6.1px;line-height:7.32px;color:#000;font-family:'Liberation Serif',serif;-webkit-text-stroke:0.12px;">sublingual immunotherapy; sustained unresponsiveness.</span>
<div style="left:467.2px;top:79.5px;width:0.9px;height:305px;background:#dedede;"></div>
<div style="left:468px;top:79.5px;width:136px;height:305px;background:#fff;"></div>
<div style="left:468px;top:79.5px;width:136px;height:10.2px;background:#ececec;"></div>
<span id="t123" class="t" style="left:475px;top:81.82px;font-size:5.4px;line-height:6.48px;color:#222;font-weight:700;letter-spacing:0.099px;">Article Galaxy</span>
<svg style="left:595.2px;top:82px;" width="5.6" height="5.6" viewBox="0 0 5.6 5.6"><circle cx="2.8" cy="2.8" r="2.85" fill="#5c5c5c"/><path stroke="#ececec" stroke-width="0.6" d="M1.8 1.8 L3.8 3.8 M3.8 1.8 L1.8 3.8"/></svg>
<div style="left:468.6px;top:89.7px;width:27.2px;height:16px;background:#edf2fd;"></div>
<div style="left:468.6px;top:106px;width:27.2px;height:1.3px;background:#5686ec;"></div>
<svg style="left:472.2px;top:94.8px;" width="4.8" height="3.6" viewBox="0 0 4 3"><path fill="#3b6be0" d="M0.5 0.3 H1.4 V1.3 L0.9 2.4 H0.4 L0.7 1.3 H0.5 Z M2.3 0.3 H3.2 V1.3 L2.7 2.4 H2.2 L2.5 1.3 H2.3 Z"/></svg>
<span id="t124" class="t" style="left:479px;top:96.16px;font-size:5px;line-height:6px;color:#3b6be0;letter-spacing:0.120px;-webkit-text-stroke:0.1px;">Cites</span>
<svg style="left:502.6px;top:95.4px;" width="5" height="7" viewBox="0 0 5 7"><path stroke="#3b6be0" fill="none" stroke-width="0.6" stroke-linejoin="round" stroke-linecap="round" d="M0.8 0.6 L2.6 3.2 L4.4 2.8 L2.4 6.2 L2.2 4.4 L0.6 4.8"/></svg>
<span id="t125" class="t" style="left:511.75px;top:96.16px;font-size:5px;line-height:6px;color:#2a2a2a;letter-spacing:0.114px;-webkit-text-stroke:0.08px;">Styles</span>
<svg style="left:535.2px;top:96px;" width="6" height="6" viewBox="0 0 6 6"><path stroke="#3b6be0" stroke-width="0.5" d="M3 0.2 V5.8 M0.2 3 H5.8"/></svg>
<span id="t126" class="t" style="left:545px;top:96.16px;font-size:5px;line-height:6px;color:#2a2a2a;letter-spacing:0.229px;-webkit-text-stroke:0.08px;">Actions</span>
<svg style="left:566.6px;top:97.6px;" width="4.6" height="3" viewBox="0 0 4.6 3"><path stroke="#999" fill="none" stroke-width="0.45" d="M0.3 0.4 L2.3 2.4 L4.3 0.4"/></svg>
<div style="left:580.15px;top:98.1px;width:0.9px;height:0.9px;border-radius:50%;background:#aaa"></div>
<div style="left:582.65px;top:98.1px;width:0.9px;height:0.9px;border-radius:50%;background:#aaa"></div>
<div style="left:585.15px;top:98.1px;width:0.9px;height:0.9px;border-radius:50%;background:#aaa"></div>
<span id="t127" class="t" style="left:470.9px;top:110.07px;font-size:7.7px;line-height:9.24px;color:#2a2a2a;letter-spacing:0.106px;-webkit-text-stroke:0.06px;">Select folder:</span>
<div style="left:470.7px;top:123.4px;width:117.5px;height:11.9px;box-sizing:border-box;border:0.7px solid #b9b9b9;border-radius:1.4px;background:#fff"></div>
<span id="t128" class="t" style="left:474.5px;top:126.36px;font-size:5px;line-height:6px;color:#222;letter-spacing:0.202px;">Allergies</span>
<svg style="left:580.2px;top:128.2px;" width="4.8" height="3" viewBox="0 0 4.8 3"><path stroke="#999" fill="none" stroke-width="0.45" d="M0.3 0.4 L2.4 2.5 L4.5 0.4"/></svg>
<svg style="left:590.6px;top:125.4px;" width="7.4" height="7.4" viewBox="0 0 7.4 7.4"><path stroke="#3b6be0" fill="none" stroke-width="0.5" stroke-linecap="round" d="M2.6 1 A3 3 0 1 0 4.6 1 M3.6 0.2 L4.7 1 L3.9 2.1"/></svg>
<div style="left:470.7px;top:139.7px;width:117.5px;height:11.9px;box-sizing:border-box;border:0.7px solid #b3bfdb;border-radius:1.4px;background:#fff"></div>
<svg style="left:475.6px;top:142px;" width="7" height="7" viewBox="0 0 7 7"><circle cx="4.4" cy="2.7" r="2.1" fill="none" stroke="#3b6be0" stroke-width="0.55"/><path stroke="#3b6be0" stroke-width="0.6" stroke-linecap="round" d="M2.9 4.2 L0.6 6.5"/></svg>
<span id="t129" class="t" style="left:485.5px;top:142.96px;font-size:5px;line-height:6px;color:#222;letter-spacing:0.244px;">Allergy</span>
<svg style="left:578.4px;top:143px;" width="5.2" height="5.2" viewBox="0 0 5.2 5.2"><path stroke="#9a9a9a" stroke-width="0.5" d="M0.4 0.4 L4.8 4.8 M4.8 0.4 L0.4 4.8"/></svg>
<svg style="left:590.6px;top:142px;" width="7" height="7" viewBox="0 0 7 7"><circle cx="4.4" cy="2.7" r="2.1" fill="none" stroke="#3b6be0" stroke-width="0.55"/><path stroke="#3b6be0" stroke-width="0.6" stroke-linecap="round" d="M2.9 4.2 L0.6 6.5"/></svg>
<div style="left:596.8px;top:157px;width:1.5px;height:21.5px;border-radius:0.8px;background:#5a5a5a"></div>
<div style="left:471.25px;top:156px;width:123px;height:80.8px;background:#ebebeb;"></div>
<span id="t130" class="t" style="left:475.5px;top:160.28px;font-size:5.3px;line-height:6.36px;color:#1a1a1a;letter-spacing:0.101px;-webkit-text-stroke:0.08px;">Current Trend in Immunotherapy for Pean</span>
<span id="t131" class="t" style="left:475.5px;top:167.28px;font-size:5.3px;line-height:6.36px;color:#1a1a1a;letter-spacing:0.141px;-webkit-text-stroke:0.08px;">ut Allergy</span>
<svg style="left:582.3px;top:159.5px" width="8.8" height="8.8" viewBox="-10 -10 20 20"><circle r="10" fill="#111"/><circle r="6.4" fill="none" stroke="#fff" stroke-width="1.5"/><path fill="#fff" d="M-2.2 -3.6 L4 0 L-2.2 3.6 Z"/></svg>
<span id="t132" class="t" style="left:475.5px;top:176.41px;font-size:4.4px;line-height:5.28px;color:#3666e4;letter-spacing:0.077px;-webkit-text-stroke:0.07px;">Joo Chan Chong, Richardo Timmy, Lim Renee Lay Hong</span>
<span id="t133" class="t" style="left:475.5px;top:184.45px;font-size:4.5px;line-height:5.4px;color:#1a1a1a;letter-spacing:0.210px;-webkit-text-stroke:0.08px;">DOI 10.1080/08830185.2018.1509967 - PMID 30638</span>
<span id="t134" class="t" style="left:475.5px;top:190.15px;font-size:4.5px;line-height:5.4px;color:#1a1a1a;letter-spacing:0.161px;-webkit-text-stroke:0.08px;">084</span>
<span id="t135" class="t" style="left:475.5px;top:199.31px;font-size:4.4px;line-height:5.28px;color:#2a2a2a;letter-spacing:0.183px;-webkit-text-stroke:0.08px;">International Reviews of Immunology | 2018</span>
<svg style="left:499.4px;top:211.7px;" width="5.8" height="5.8" viewBox="0 0 5.8 5.8"><circle cx="2.9" cy="2.9" r="2.8" fill="#5e5e5e"/><path stroke="#c8c8c8" fill="none" stroke-width="0.4" d="M1.6 1.6 L4.2 4.2 M4.2 1.6 L1.6 4.2 M2.9 1.1 V4.7 M1.1 2.9 H4.7"/></svg>
<span id="t136" class="t" style="left:507.3px;top:212.11px;font-size:4.4px;line-height:5.28px;color:#2e2e2e;letter-spacing:0.170px;-webkit-text-stroke:0.08px;">Recommended articles by AI</span>
<div style="left:507.2px;top:225.1px;width:53px;height:6.8px;border-radius:3px;background:#fff;"></div>
<div style="left:522.2px;top:225.4px;width:0.4px;height:6.2px;background:#ddd;"></div>
<div style="left:534.2px;top:225.4px;width:0.4px;height:6.2px;background:#ddd;"></div>
<div style="left:546.1px;top:225.4px;width:0.4px;height:6.2px;background:#ddd;"></div>
<svg style="left:509.6px;top:226.7px;" width="3.6" height="3.6" viewBox="0 0 3.6 3.6"><path stroke="#888" fill="none" stroke-width="0.4" d="M0.4 0.6 H3.2 V3.2 H0.4 Z M0.4 1.4 H3.2 M1.2 2 H2.4 M1.2 2.6 H2.4"/></svg>
<span id="t137" class="t" style="left:516.07px;top:226.25px;font-size:4px;line-height:4.8px;color:#3a3a3a;font-weight:700;">15</span>
<svg style="left:524.2px;top:226.7px;" width="3.6" height="3.6" viewBox="0 0 3.6 3.6"><circle cx="1.8" cy="1.8" r="1.6" fill="#a9dcb8"/><circle cx="1.8" cy="1.8" r="0.9" fill="none" stroke="#5fb87c" stroke-width="0.35"/></svg>
<span id="t138" class="t" style="left:530.39px;top:226.25px;font-size:4px;line-height:4.8px;color:#3a3a3a;font-weight:700;">0</span>
<svg style="left:536.6px;top:226.7px;" width="3.6" height="3.6" viewBox="0 0 3.6 3.6"><circle cx="1.8" cy="1.8" r="1.5" fill="none" stroke="#777" stroke-width="0.4"/><path stroke="#777" fill="none" stroke-width="0.35" d="M1.8 0.9 V1.9 L2.5 2.3"/></svg>
<span id="t139" class="t" style="left:542.29px;top:226.25px;font-size:4px;line-height:4.8px;color:#3a3a3a;font-weight:700;">4</span>
<svg style="left:548.2px;top:226.7px;" width="3.6" height="3.6" viewBox="0 0 3.6 3.6"><circle cx="1.8" cy="1.8" r="1.5" fill="#dbe6fb" stroke="#4a7be6" stroke-width="0.45"/><path stroke="#4a7be6" fill="none" stroke-width="0.35" d="M1.3 1.4 C1.3 0.8 2.3 0.8 2.3 1.4 C2.3 1.8 1.8 1.8 1.8 2.2"/></svg>
<span id="t140" class="t" style="left:554.64px;top:226.25px;font-size:4px;line-height:4.8px;color:#3a3a3a;font-weight:700;">0</span>
<span id="t141" class="t" style="left:475.5px;top:242.58px;font-size:5.3px;line-height:6.36px;color:#1a1a1a;letter-spacing:0.020px;-webkit-text-stroke:0.08px;">Peanut Allergy: Changes in Dogma and Pa</span>
<span id="t142" class="t" style="left:475.5px;top:249.58px;font-size:5.3px;line-height:6.36px;color:#1a1a1a;letter-spacing:0.062px;-webkit-text-stroke:0.08px;">st, Present, and Future Directions</span>
<svg style="left:582.3px;top:241.8px" width="8.8" height="8.8" viewBox="-10 -10 20 20"><circle r="10" fill="#111"/><circle r="6.4" fill="none" stroke="#fff" stroke-width="1.5"/><path fill="#fff" d="M-2.2 -3.6 L4 0 L-2.2 3.6 Z"/></svg>
<span id="t143" class="t" style="left:475.5px;top:258.71px;font-size:4.4px;line-height:5.28px;color:#3666e4;letter-spacing:0.109px;-webkit-text-stroke:0.07px;">Boudreau-Romano Sarah, Qamar Nashmia</span>
<span id="t144" class="t" style="left:475.5px;top:266.75px;font-size:4.5px;line-height:5.4px;color:#1a1a1a;letter-spacing:0.226px;-webkit-text-stroke:0.08px;">DOI 10.3928/19382359-20180621-02 - PMID 30001</span>
<span id="t145" class="t" style="left:475.5px;top:272.45px;font-size:4.5px;line-height:5.4px;color:#1a1a1a;letter-spacing:0.161px;-webkit-text-stroke:0.08px;">445</span>
<span id="t146" class="t" style="left:475.5px;top:281.61px;font-size:4.4px;line-height:5.28px;color:#2a2a2a;letter-spacing:0.156px;-webkit-text-stroke:0.08px;">Pediatric Annals | 2018</span>
<svg style="left:499.4px;top:294px;" width="5.8" height="5.8" viewBox="0 0 5.8 5.8"><circle cx="2.9" cy="2.9" r="2.8" fill="#5e5e5e"/><path stroke="#c8c8c8" fill="none" stroke-width="0.4" d="M1.6 1.6 L4.2 4.2 M4.2 1.6 L1.6 4.2 M2.9 1.1 V4.7 M1.1 2.9 H4.7"/></svg>
<span id="t147" class="t" style="left:507.3px;top:294.41px;font-size:4.4px;line-height:5.28px;color:#2e2e2e;letter-spacing:0.170px;-webkit-text-stroke:0.08px;">Recommended articles by AI</span>
<div style="left:507.2px;top:307.4px;width:53px;height:6.8px;border-radius:3px;background:#fff;box-shadow:0 0 0 0.4px #d4d4d4;"></div>
<div style="left:522.2px;top:307.7px;width:0.4px;height:6.2px;background:#ddd;"></div>
<div style="left:534.2px;top:307.7px;width:0.4px;height:6.2px;background:#ddd;"></div>
<div style="left:546.1px;top:307.7px;width:0.4px;height:6.2px;background:#ddd;"></div>
<svg style="left:509.6px;top:309px;" width="3.6" height="3.6" viewBox="0 0 3.6 3.6"><path stroke="#888" fill="none" stroke-width="0.4" d="M0.4 0.6 H3.2 V3.2 H0.4 Z M0.4 1.4 H3.2 M1.2 2 H2.4 M1.2 2.6 H2.4"/></svg>
<span id="t148" class="t" style="left:517.19px;top:308.55px;font-size:4px;line-height:4.8px;color:#3a3a3a;font-weight:700;">2</span>
<svg style="left:524.2px;top:309px;" width="3.6" height="3.6" viewBox="0 0 3.6 3.6"><circle cx="1.8" cy="1.8" r="1.6" fill="#a9dcb8"/><circle cx="1.8" cy="1.8" r="0.9" fill="none" stroke="#5fb87c" stroke-width="0.35"/></svg>
<span id="t149" class="t" style="left:530.39px;top:308.55px;font-size:4px;line-height:4.8px;color:#3a3a3a;font-weight:700;">0</span>
<svg style="left:536.6px;top:309px;" width="3.6" height="3.6" viewBox="0 0 3.6 3.6"><circle cx="1.8" cy="1.8" r="1.5" fill="none" stroke="#777" stroke-width="0.4"/><path stroke="#777" fill="none" stroke-width="0.35" d="M1.8 0.9 V1.9 L2.5 2.3"/></svg>
<span id="t150" class="t" style="left:542.29px;top:308.55px;font-size:4px;line-height:4.8px;color:#3a3a3a;font-weight:700;">1</span>
<svg style="left:548.2px;top:309px;" width="3.6" height="3.6" viewBox="0 0 3.6 3.6"><circle cx="1.8" cy="1.8" r="1.5" fill="#dbe6fb" stroke="#4a7be6" stroke-width="0.45"/><path stroke="#4a7be6" fill="none" stroke-width="0.35" d="M1.3 1.4 C1.3 0.8 2.3 0.8 2.3 1.4 C2.3 1.8 1.8 1.8 1.8 2.2"/></svg>
<span id="t151" class="t" style="left:554.64px;top:308.55px;font-size:4px;line-height:4.8px;color:#3a3a3a;font-weight:700;">0</span>
<div style="left:471.25px;top:319px;width:123px;height:0.5px;background:#e6e6e6;"></div>
<div style="left:468px;top:320px;width:136px;height:46.3px;overflow:hidden"><div style="left:-468px;top:-320px;width:620px;height:434px">
<span id="t152" class="t" style="left:475.5px;top:324.18px;font-size:5.3px;line-height:6.36px;color:#1a1a1a;letter-spacing:0.020px;-webkit-text-stroke:0.08px;">Peanut Allergy: Changes in Dogma and Pa</span>
<span id="t153" class="t" style="left:475.5px;top:331.18px;font-size:5.3px;line-height:6.36px;color:#1a1a1a;letter-spacing:0.062px;-webkit-text-stroke:0.08px;">st, Present, and Future Directions</span>
<svg style="left:582.3px;top:323.4px" width="8.8" height="8.8" viewBox="-10 -10 20 20"><circle r="10" fill="#111"/><circle r="6.4" fill="none" stroke="#fff" stroke-width="1.5"/><path fill="#fff" d="M-2.2 -3.6 L4 0 L-2.2 3.6 Z"/></svg>
<span id="t154" class="t" style="left:475.5px;top:340.31px;font-size:4.4px;line-height:5.28px;color:#3666e4;letter-spacing:0.109px;-webkit-text-stroke:0.07px;">Boudreau-Romano Sarah, Qamar Nashmia</span>
<span id="t155" class="t" style="left:475.5px;top:348.35px;font-size:4.5px;line-height:5.4px;color:#1a1a1a;letter-spacing:0.226px;-webkit-text-stroke:0.08px;">DOI 10.3928/19382359-20180621-02 - PMID 30001</span>
<span id="t156" class="t" style="left:475.5px;top:354.05px;font-size:4.5px;line-height:5.4px;color:#1a1a1a;letter-spacing:0.161px;-webkit-text-stroke:0.08px;">445</span>
<span id="t157" class="t" style="left:475.5px;top:363.21px;font-size:4.4px;line-height:5.28px;color:#2a2a2a;letter-spacing:0.156px;-webkit-text-stroke:0.08px;">Pediatric Annals | 2018</span>
</div></div>
<div style="left:545px;top:369.5px;width:55px;height:12.5px;background:#2563eb;"></div>
<span id="t158" class="t" style="left:553.2px;top:373.06px;font-size:5px;line-height:6px;color:#fff;font-weight:700;letter-spacing:0.189px;">Insert citations</span>
<div style="left:16px;top:384px;width:588px;height:10px;background:linear-gradient(#e6e6e6,#d6d6d6)"></div>
<div style="left:16px;top:384px;width:588px;height:0.5px;background:#cfcfcf;"></div>
<span id="t159" class="t" style="left:25.5px;top:385.89px;font-size:4.6px;line-height:5.52px;color:#4a4a4a;letter-spacing:0.091px;-webkit-text-stroke:0.06px;">Page 1 of 2</span>
<span id="t160" class="t" style="left:58px;top:385.83px;font-size:4.7px;line-height:5.64px;color:#4a4a4a;letter-spacing:0.180px;-webkit-text-stroke:0.06px;">455 words</span>
<svg style="left:88.6px;top:386.4px;" width="5" height="4.4" viewBox="0 0 5 4.4"><path stroke="#4a4a4a" fill="none" stroke-width="0.45" d="M0.4 0.6 H2.2 V3.6 H0.4 Z M2.2 0.6 H3.6 V3.6 H2.2 M3.4 1.4 L4.4 2.2 L3.4 3"/></svg>
<span id="t161" class="t" style="left:102px;top:385.89px;font-size:4.6px;line-height:5.52px;color:#4a4a4a;letter-spacing:0.153px;-webkit-text-stroke:0.06px;">English (United States)</span>
<svg style="left:159.6px;top:386.2px;" width="5" height="5" viewBox="0 0 5 5"><path stroke="#4a4a4a" fill="none" stroke-width="0.45" d="M1.4 1.4 H4 V4.4 H1.4 Z M0.6 0.6 L2 2 M2.2 3 L2.7 3.5 L3.5 2.5"/></svg>
<span id="t162" class="t" style="left:167.5px;top:385.89px;font-size:4.6px;line-height:5.52px;color:#4a4a4a;letter-spacing:0.132px;-webkit-text-stroke:0.06px;">Accessibility: Unavailable</span>
<svg style="left:440px;top:386.2px;" width="6" height="5" viewBox="0 0 6 5"><path stroke="#4a4a4a" fill="none" stroke-width="0.55" d="M0.4 1.6 V0.4 H1.8 M4.2 0.4 H5.6 V1.6 M5.6 3.4 V4.6 H4.2 M1.8 4.6 H0.4 V3.4"/><rect x="1.5" y="1.4" width="3" height="2.2" fill="none" stroke="#4a4a4a" stroke-width="0.5"/></svg>
<span id="t163" class="t" style="left:448.9px;top:385.78px;font-size:4.8px;line-height:5.76px;color:#4a4a4a;letter-spacing:-0.094px;-webkit-text-stroke:0.06px;">Focus</span>
<div style="left:466.2px;top:384.6px;width:13.8px;height:8.4px;background:#b9b9b9;"></div>
<svg style="left:470.4px;top:386.2px;" width="5.6" height="5" viewBox="0 0 5.6 5"><rect x="0.4" y="0.4" width="4.8" height="4.2" fill="#cfcfcf" stroke="#999" stroke-width="0.4"/></svg>
<svg style="left:484.4px;top:386.2px;" width="5.6" height="5" viewBox="0 0 5.6 5"><path stroke="#4a4a4a" fill="none" stroke-width="0.5" d="M0.4 0.4 H4.4 V2.2 M0.4 0.4 V4.2 H2.6 M1.2 1.4 H3.6 M1.2 2.4 H2.8"/><circle cx="4" cy="3.6" r="1.1" fill="#4a4a4a"/></svg>
<svg style="left:498.4px;top:386.4px;" width="5.6" height="4.6" viewBox="0 0 5.6 4.6"><path stroke="#999" fill="none" stroke-width="0.45" d="M0.4 0.6 H3 M1.4 1.8 H4.6 M1.4 3 H4.6 M2.4 4.2 H4.6 M5 0.6 V4.2"/></svg>
<svg style="left:512.4px;top:386.4px;" width="5.6" height="4.6" viewBox="0 0 5.6 4.6"><path stroke="#777" fill="none" stroke-width="0.5" d="M0.4 0.5 H5 M0.4 1.7 H5 M0.4 2.9 H5 M0.4 4.1 H3.4"/></svg>
<div style="left:524.8px;top:388.4px;width:2.6px;height:0.75px;background:#4a4a4a;"></div>
<div style="left:530.5px;top:388.15px;width:39.5px;height:1.2px;background:#909090;"></div>
<div style="left:548px;top:385.9px;width:5.6px;height:5.6px;border-radius:50%;background:#fff;box-shadow:0 0 0.6px 0.2px #999"></div>
<div style="left:572.4px;top:388.4px;width:2.8px;height:0.75px;background:#4a4a4a;"></div>
<div style="left:573.43px;top:387.37px;width:0.75px;height:2.8px;background:#4a4a4a;"></div>
<span id="t164" class="t" style="left:582.1px;top:385.78px;font-size:4.8px;line-height:5.76px;color:#4a4a4a;letter-spacing:-0.043px;-webkit-text-stroke:0.06px;">130%</span>
</div>
</div></div></div></body></html>
